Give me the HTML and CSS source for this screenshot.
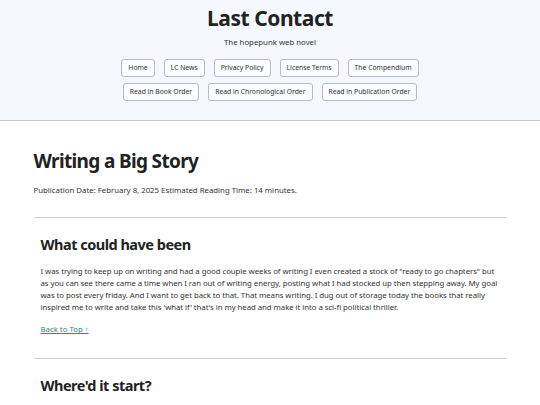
FILE: index.html
```html
<!DOCTYPE html>
<html lang="en">
<head>
<meta charset="utf-8">
<title>Writing a Big Story - Last Contact</title>
<link rel="stylesheet" href="styles.css">
</head>
<body>
<header class="site-header">
  <h1 class="site-title">Last Contact</h1>
  <p class="site-tagline">The hopepunk web novel</p>
  <nav class="nav">
    <div class="nav-row">
      <a class="nav-btn" href="#">Home</a>
      <a class="nav-btn" href="#">LC News</a>
      <a class="nav-btn" href="#">Privacy Policy</a>
      <a class="nav-btn" href="#">License Terms</a>
      <a class="nav-btn" href="#">The Compendium</a>
    </div>
    <div class="nav-row">
      <a class="nav-btn" href="#">Read in Book Order</a>
      <a class="nav-btn" href="#">Read in Chronological Order</a>
      <a class="nav-btn" href="#">Read in Publication Order</a>
    </div>
  </nav>
</header>
<main class="content">
  <h1 class="post-title">Writing a Big Story</h1>
  <p class="post-meta">Publication Date: February 8, 2025 Estimated Reading Time: 14 minutes.</p>
  <hr class="rule">
  <section class="section">
    <h2 class="section-title">What could have been</h2>
    <p class="section-text">I was trying to keep up on writing and had a good couple weeks of writing I even created a stock of "ready to go chapters" but as you can see there came a time when I ran out of writing energy, posting what I had stocked up then stepping away. My goal was to post every friday. And I want to get back to that. That means writing. I dug out of storage today the books that really inspired me to write and take this 'what if' that's in my head and make it into a sci-fi political thriller.</p>
    <p class="back-wrap"><a class="back-top" href="#">Back to Top ↑</a></p>
  </section>
  <hr class="rule rule-tight">
  <section class="section">
    <h2 class="section-title">Where'd it start?</h2>
  </section>
</main>
</body>
</html>
```
FILE: styles.css
```css
html, body {
  margin: 0;
  padding: 0;
}
body {
  font-family: "Noto Sans", "Open Sans", sans-serif;
  font-size: 7.8px;
  color: #222;
  background: #fff;
}
.site-header {
  background: #f5f8ff;
  border-bottom: 1px solid #c8c8cc;
  padding: 6px 0 19px;
  text-align: center;
}
.site-title {
  margin: 0;
  font-size: 21px;
  line-height: 1.2;
  font-weight: 700;
  letter-spacing: -0.45px;
  color: #222;
}
.site-tagline {
  margin: 5px 0 0;
  font-size: 7.8px;
  line-height: 12px;
  color: #333;
}
.nav {
  margin-top: 11px;
  display: flex;
  flex-direction: column;
  gap: 6px;
}
.nav-row {
  display: flex;
  justify-content: center;
  gap: 9px;
}
.nav-btn {
  display: block;
  font-size: 6.8px;
  line-height: 10px;
  padding: 3px 6px;
  border: 1px solid #b9bcc6;
  border-radius: 3px;
  background: #fbfcff;
  color: #333;
  text-decoration: none;
}
.content {
  max-width: 473px;
  margin: 0 auto;
  padding: 29px 0 0;
}
.post-title {
  margin: 0;
  font-size: 19px;
  line-height: 1.2;
  font-weight: 700;
  letter-spacing: -0.65px;
  color: #222;
}
.post-meta {
  margin: 11px 0 0;
  font-size: 7.8px;
  line-height: 12px;
  color: #333;
}
.rule {
  border: 0;
  border-top: 1px solid #cfcfd4;
  margin: 21px 0 0;
}
.rule-tight {
  margin-top: 0;
}
.section {
  padding: 18px 7px 23px;
}
.section-title {
  margin: 0;
  font-size: 14.5px;
  line-height: 1.2;
  font-weight: 700;
  letter-spacing: -0.5px;
  color: #222;
}
.section-text {
  margin: 12px 0 0;
  font-size: 7.8px;
  line-height: 12px;
  letter-spacing: -0.05px;
  color: #333;
}
.back-wrap {
  margin: 10px 0 0;
  font-size: 7.8px;
  line-height: 12px;
}
.back-top {
  color: #2a8a8a;
}
```
